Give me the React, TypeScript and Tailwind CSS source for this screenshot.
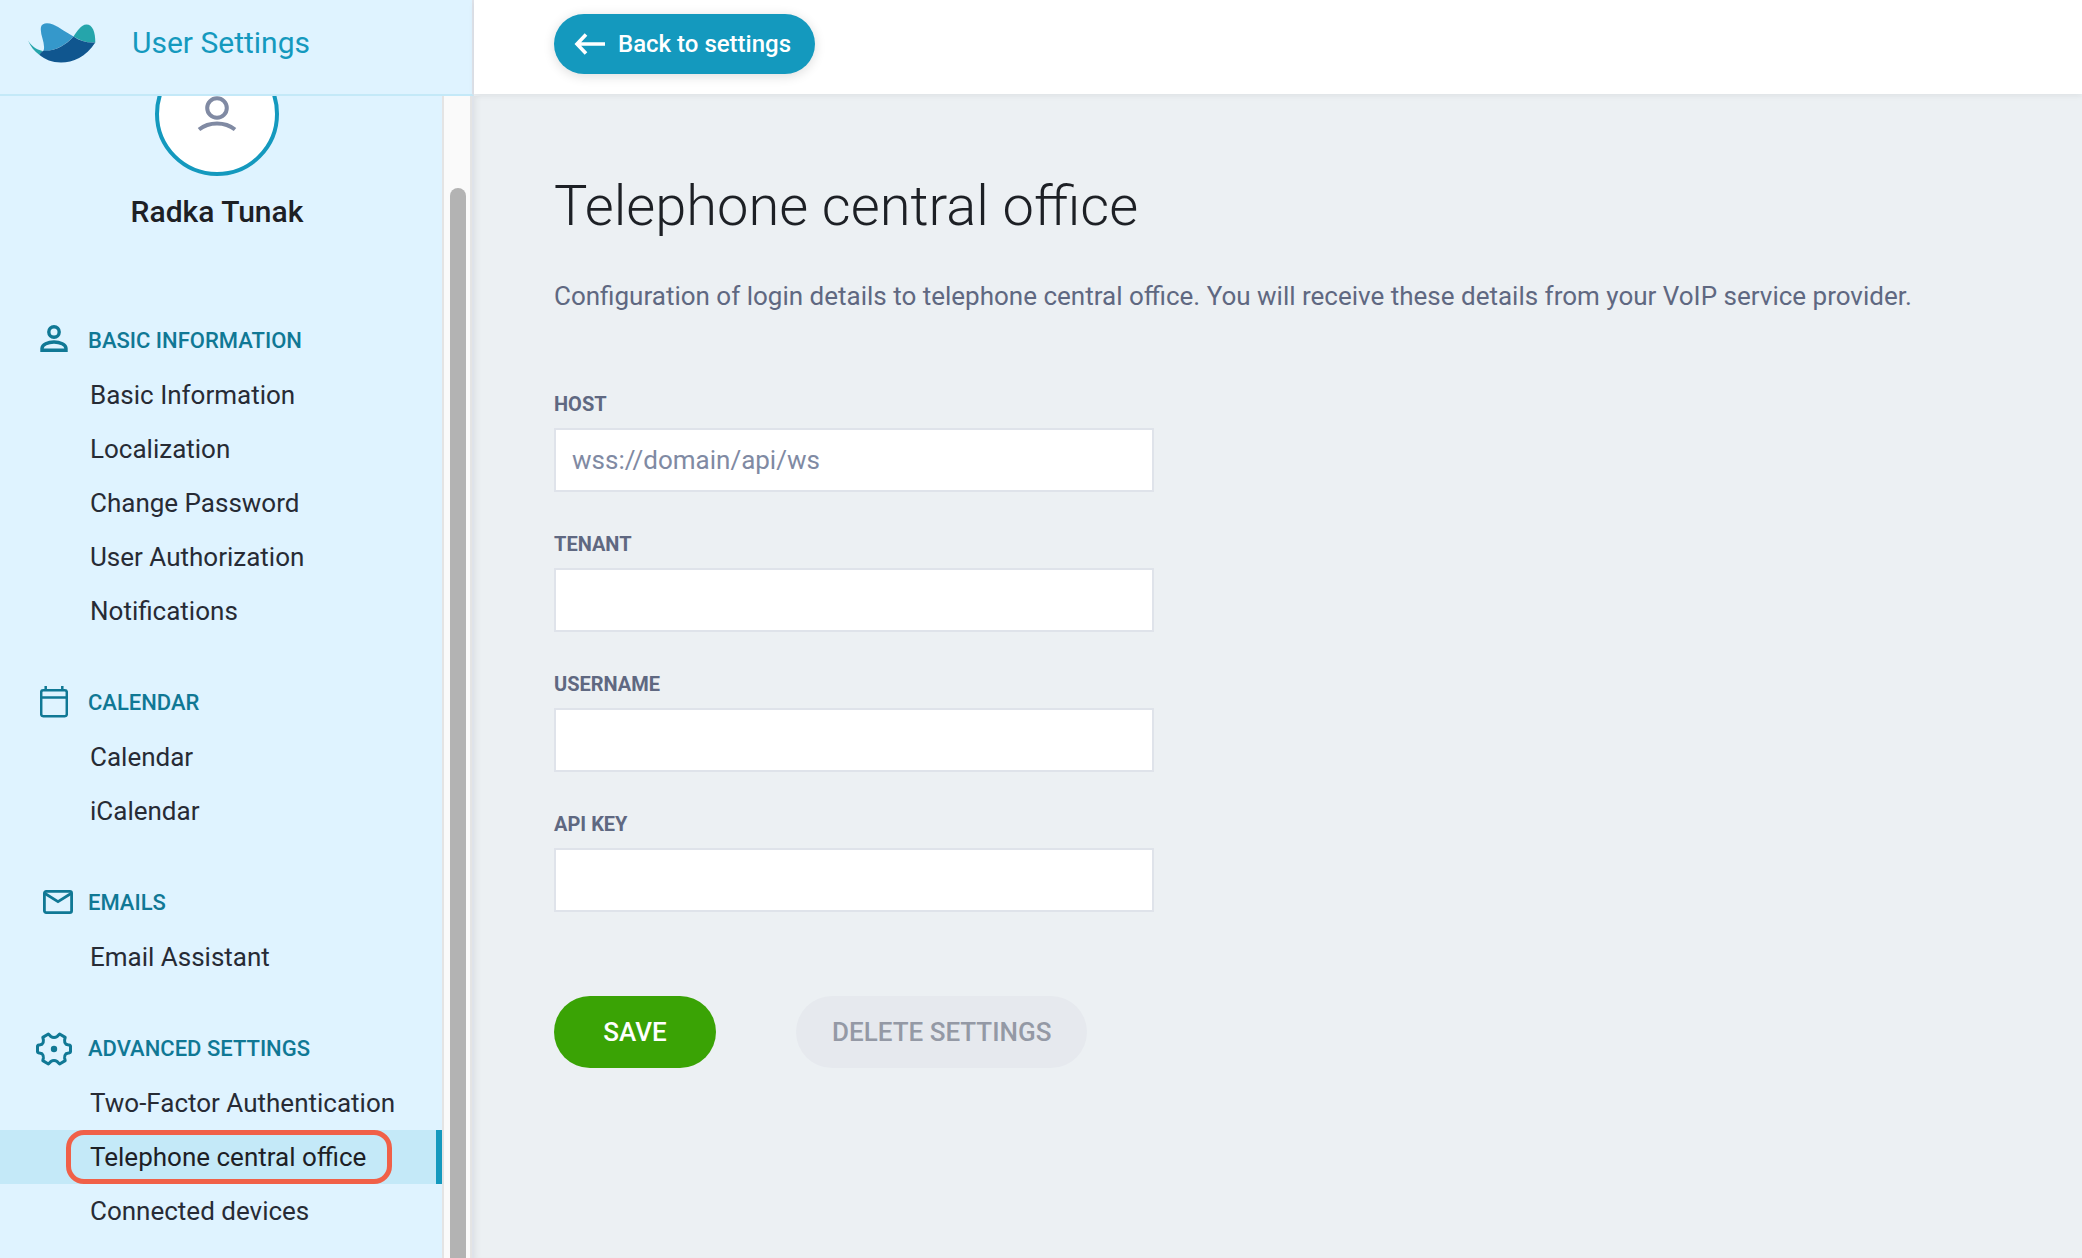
import { useLayoutEffect, useRef, type ReactNode } from "react";

type Section = {
  title: string;
  icon: ReactNode;
  items: string[];
};

const ACTIVE_ITEM = "Telephone central office";

function Logo() {
  return (
    <svg width="68" height="40" viewBox="0 0 68 40" aria-hidden="true">
      <path
        d="M0 17.5C3.5 23 8 26.6 14.5 28L11.5 32C6.5 28.5 2.5 23.5 0 17.5Z"
        fill="#25a5ab"
      />
      <path
        d="M45.5 13.5C49 8.5 53 1.6 58.5 1.5C64.5 1.5 67.5 9 67.3 19.5C59 20 52 17.5 45.5 13.5Z"
        fill="#25a5ab"
      />
      <path
        d="M13 4C14 -0.5 20 -0.5 25 1.5C32 4.5 38 9.5 45.5 13.5C38 22 27 28 15.5 28C18 20 11.5 12 13 4Z"
        fill="#3598cb"
      />
      <path
        d="M11.5 32C12.5 30 13.5 28.6 15.5 27.8C27 28.5 38 22 45.5 13.5C52 18 59 20 67.3 19.5C58 34 45 39.5 33 39.5C24 39.5 17 36.5 11.5 32Z"
        fill="#10568f"
      />
    </svg>
  );
}

function PersonIcon() {
  return (
    <svg width="28" height="32" viewBox="0 0 28 32" fill="none" stroke="currentColor" strokeWidth="3.4" aria-hidden="true">
      <circle cx="14" cy="7" r="5.2" />
      <path d="M2 25.3V23.5C2 19.5 8 17 14 17s12 2.500 12 6.500v1.800Z" />
    </svg>
  );
}

function CalendarIcon() {
  return (
    <svg width="28" height="34" viewBox="0 0 28 34" fill="none" stroke="currentColor" strokeWidth="2.5" aria-hidden="true">
      <rect x="1.2" y="4.2" width="25.6" height="26" rx="2" />
      <path d="M1 11.500h26M5.700 0v4M22.300 0v4" />
    </svg>
  );
}

function MailIcon() {
  return (
    <svg width="38" height="26" viewBox="-8 0 38 26" fill="none" stroke="currentColor" strokeWidth="2.8" aria-hidden="true">
      <rect x="1.4" y="1.4" width="27.2" height="21.2" rx="1.8" />
      <path d="M2 3.500 15 11.700 28 3.500" />
    </svg>
  );
}

function GearIcon() {
  return (
    <svg width="36" height="34" viewBox="0 0 36 34" fill="none" stroke="currentColor" strokeWidth="3" strokeLinejoin="round" aria-hidden="true">
      <path d="M34.5 14.5V19.5Q34.5 20.7 33 20.9L30 21.8Q28.3 23.5 28.6 26L29.2 28.6L23.6 32L21.2 29.6Q18 27.6 14.8 29.6L12.4 32L6.8 28.6L7.4 26Q7.7 23.5 6 21.8L3 20.9Q1.5 20.7 1.5 19.5V14.5Q1.5 13.3 3 13.1L6 12.2Q7.7 10.5 7.4 8L6.8 5.4L12.4 2L14.8 4.4Q18 6.4 21.2 4.4L23.6 2L29.2 5.4L28.6 8Q28.3 10.5 30 12.2L33 13.1Q34.5 13.3 34.5 14.5Z" />
      <circle cx="18" cy="17" r="3.2" fill="currentColor" stroke="none" />
    </svg>
  );
}

const sections: Section[] = [
  {
    title: "Basic information",
    icon: <PersonIcon />,
    items: [
      "Basic Information",
      "Localization",
      "Change Password",
      "User Authorization",
      "Notifications",
    ],
  },
  { title: "Calendar", icon: <CalendarIcon />, items: ["Calendar", "iCalendar"] },
  { title: "Emails", icon: <MailIcon />, items: ["Email Assistant"] },
  {
    title: "Advanced settings",
    icon: <GearIcon />,
    items: ["Two-Factor Authentication", ACTIVE_ITEM, "Connected devices"],
  },
];

const fields = [
  { id: "host", label: "Host", placeholder: "wss://domain/api/ws" },
  { id: "tenant", label: "Tenant" },
  { id: "username", label: "Username" },
  { id: "api-key", label: "API key" },
];

function NavItem({ label }: { label: string }) {
  const active = label === ACTIVE_ITEM;

  if (!active) {
    return (
      <li>
        <a href="#" className="block pl-[90px] text-[26px] leading-[54px] text-[#272b35]">
          {label}
        </a>
      </li>
    );
  }

  return (
    <li className="relative border-r-6 border-[#1499be] bg-[#c4e9f8]">
      <a
        href="#"
        aria-current="page"
        className="block pl-[90px] text-[26px] leading-[54px] text-[#1d2025]"
      >
        {label}
      </a>
      {/* Highlight ring */}
      <span className="pointer-events-none absolute inset-y-0 left-[66px] w-[326px] rounded-[18px] border-5 border-[#f06048]" />
    </li>
  );
}

function Sidebar() {
  const scroller = useRef<HTMLDivElement>(null);

  useLayoutEffect(() => {
    if (scroller.current) scroller.current.scrollTop = 92;
  }, []);

  return (
    <aside className="flex w-[474px] shrink-0 border-r-2 border-[#dfe3ea] bg-[#dff3ff]">
      <div ref={scroller} className="flex-1 overflow-y-auto [scrollbar-width:none]">
        <div className="flex flex-col items-center pt-12 pr-2">
          <div className="flex size-[124px] items-center justify-center rounded-full border-4 border-[#1499be] bg-white">
            <svg width="40" height="36" viewBox="0 0 40 36" fill="none" stroke="#808aa3" strokeWidth="4" aria-hidden="true">
              <circle cx="20" cy="12" r="9.8" />
              <path d="M2 33.500C12 25.500 28 25.500 38 33.500" />
            </svg>
          </div>
          <p className="mt-4 text-[30px] leading-10 font-medium text-[#1d2025]">Radka Tunak</p>
        </div>

        <nav className="mt-[82px] flex flex-col gap-[38px] pb-20">
          {sections.map((section) => (
            <section key={section.title}>
              <h2 className="flex items-center text-[22px] leading-[54px] font-medium text-[#107895] uppercase">
                <span className="flex w-[88px] justify-center pl-5">{section.icon}</span>
                {section.title}
              </h2>
              <ul>
                {section.items.map((item) => (
                  <NavItem key={item} label={item} />
                ))}
              </ul>
            </section>
          ))}
        </nav>
      </div>

      {/* Scrollbar */}
      <div className="flex w-[30px] justify-center border-x-2 border-[#e4e4e4] bg-[#fafafa] pt-[92px] pl-0.5">
        <div className="w-4 rounded-t-full bg-[#b3b3b3]" />
      </div>
    </aside>
  );
}

export default function App() {
  return (
    <div className="flex h-screen flex-col bg-[#ecf0f3] font-[Roboto,sans-serif]">
      <header className="flex h-24 shrink-0">
        <div className="flex w-[474px] shrink-0 items-center gap-9 border-r-2 border-b-2 border-r-[#dfe3ea] border-b-[#c4e9f8] bg-[#dff3ff] pb-2 pl-7">
          <Logo />
          <span className="text-[30px] leading-10 text-[#1499be]">User Settings</span>
        </div>
        <div className="flex h-[94px] flex-1 items-center bg-white pb-1.5 pl-20 shadow-[0_2px_6px_rgba(0,0,0,0.06)]">
          <button
            type="button"
            className="flex h-[60px] items-center gap-3 rounded-full bg-[#1499be] pr-6 pl-5 text-2xl font-medium text-white shadow-[0_2px_12px_rgba(0,0,0,0.14)]"
          >
            <svg width="32" height="22" viewBox="0 0 32 22" fill="none" stroke="currentColor" strokeWidth="3.6" aria-hidden="true">
              <path d="M12 1.500 3 11l9 9.500M3 11h28" />
            </svg>
            Back to settings
          </button>
        </div>
      </header>

      <div className="flex min-h-0 flex-1">
        <Sidebar />

        <main className="flex-1 overflow-hidden px-20 pt-[76px] shadow-[inset_6px_0_6px_-4px_rgba(0,0,0,0.06)]">
          <h1 className="text-[56px] leading-[68px] font-light text-[#1d2025]">
            Telephone central office
          </h1>
          <p className="mt-9 text-[26px] leading-10 text-[#5f6881]">
            Configuration of login details to telephone central office. You will receive these
            details from your VoIP service provider.
          </p>

          <form className="mt-[72px]">
            <div className="flex max-w-[600px] flex-col gap-9">
              {fields.map((field) => (
                <div key={field.id}>
                  <label
                    htmlFor={field.id}
                    className="block pb-2 text-xl leading-8 font-bold text-[#5f6881] uppercase"
                  >
                    {field.label}
                  </label>
                  <input
                    id={field.id}
                    type="text"
                    placeholder={field.placeholder}
                    className="block h-16 w-full border-2 border-[#dfe3ea] bg-white px-4 text-[26px] text-[#1d2025] placeholder:text-[#808aa3]"
                  />
                </div>
              ))}
            </div>

            <div className="mt-[84px] flex gap-20">
              <button
                type="submit"
                className="h-[72px] w-[162px] rounded-full bg-[#3aa305] text-[26px] font-medium text-white uppercase"
              >
                Save
              </button>
              <button
                type="button"
                className="h-[72px] rounded-full bg-[#e6e9ee] px-9 text-[26px] font-medium text-[#9499a5] uppercase"
              >
                Delete settings
              </button>
            </div>
          </form>
        </main>
      </div>
    </div>
  );
}
